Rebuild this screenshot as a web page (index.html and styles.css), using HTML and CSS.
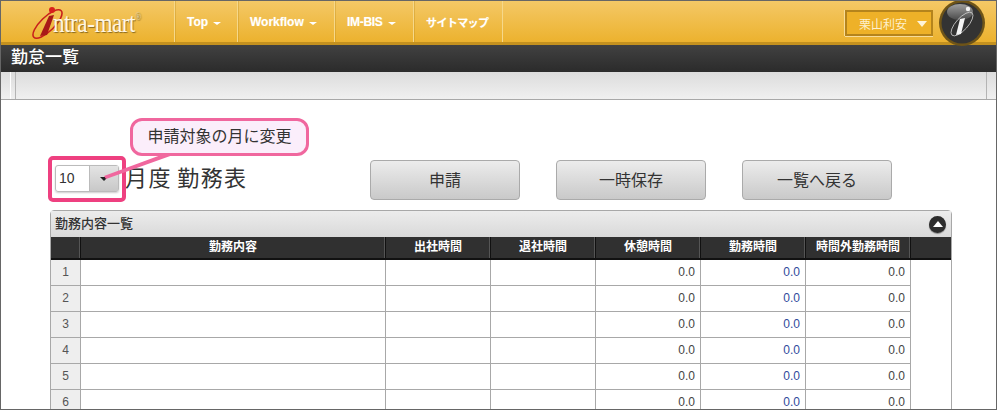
FILE: index.html
```html
<!DOCTYPE html>
<html lang="ja">
<head>
<meta charset="utf-8">
<title>勤怠一覧</title>
<link rel="stylesheet" href="styles.css">
</head>
<body>
<div class="frame">
  <header class="topbar">
    <div class="logo">
      <svg class="logo-mark" width="32" height="36" viewBox="0 0 32 36">
        <ellipse cx="15.5" cy="20" rx="19" ry="7" transform="rotate(-44 15.5 20)" fill="none" stroke="#c8201c" stroke-width="1.6"/>
        <path d="M17 12 L22 11 L15 31 L8 32 Z" fill="#a81a18"/>
        <circle cx="20" cy="6" r="3" fill="#d8201c"/>
      </svg>
      <span class="logo-text">ntra-mart<sup class="logo-reg">®</sup></span>
    </div>
    <nav class="nav">
      <a class="nav-item nav-top">Top<i class="caret"></i></a>
      <a class="nav-item nav-wf">Workflow<i class="caret"></i></a>
      <a class="nav-item nav-im">IM-BIS<i class="caret"></i></a>
      <a class="nav-item nav-map">サイトマップ</a>
    </nav>
    <div class="user">栗山利安<i class="user-caret"></i></div>
    <svg class="badge" width="48" height="48" viewBox="0 0 48 48">
      <defs>
        <linearGradient id="shine" x1="0" y1="0" x2="0" y2="1">
          <stop offset="0" stop-color="#a0a0a0"/>
          <stop offset="1" stop-color="#4a4a4a"/>
        </linearGradient>
      </defs>
      <circle cx="24" cy="24" r="23" fill="#6e5418"/>
      <circle cx="24" cy="24" r="20.5" fill="#333"/>
      <ellipse cx="22" cy="13" rx="13" ry="8" fill="url(#shine)"/>
      <ellipse cx="24" cy="25" rx="15" ry="6" transform="rotate(-48 24 25)" fill="none" stroke="#ccc" stroke-width="0.8"/>
      <path d="M22 20 L27 19 L23 35 L18 36 Z" fill="#f4f4f4"/>
      <circle cx="30" cy="10" r="2.2" fill="#f4f4f4"/>
    </svg>
  </header>
  <div class="titlebar">勤怠一覧</div>
  <div class="toolbar"><span class="tool-grip"></span><span class="tool-fill"></span></div>
  <main class="content">
    <div class="actions">
      <div class="month">
        <div class="select"><span class="select-value">10</span><span class="select-btn"><i class="select-caret"></i></span></div>
        <h1 class="heading">月度 勤務表</h1>
      </div>
      <button class="btn">申請</button>
      <button class="btn">一時保存</button>
      <button class="btn">一覧へ戻る</button>
    </div>
    <section class="panel">
      <div class="panel-head">
        <span class="panel-title">勤務内容一覧</span>
        <span class="collapse"><i class="collapse-arrow"></i></span>
      </div>
      <table class="grid">
        <colgroup>
          <col class="c-idx"><col class="c-main"><col class="c-time"><col class="c-time"><col class="c-time"><col class="c-time"><col class="c-time"><col>
        </colgroup>
        <thead>
          <tr><th></th><th>勤務内容</th><th>出社時間</th><th>退社時間</th><th>休憩時間</th><th>勤務時間</th><th>時間外勤務時間</th><th></th></tr>
        </thead>
        <tbody>
          <tr><td class="idx">1</td><td></td><td></td><td></td><td class="num">0.0</td><td class="num work">0.0</td><td class="num">0.0</td><td class="blank"></td></tr>
          <tr><td class="idx">2</td><td></td><td></td><td></td><td class="num">0.0</td><td class="num work">0.0</td><td class="num">0.0</td><td class="blank"></td></tr>
          <tr><td class="idx">3</td><td></td><td></td><td></td><td class="num">0.0</td><td class="num work">0.0</td><td class="num">0.0</td><td class="blank"></td></tr>
          <tr><td class="idx">4</td><td></td><td></td><td></td><td class="num">0.0</td><td class="num work">0.0</td><td class="num">0.0</td><td class="blank"></td></tr>
          <tr><td class="idx">5</td><td></td><td></td><td></td><td class="num">0.0</td><td class="num work">0.0</td><td class="num">0.0</td><td class="blank"></td></tr>
          <tr><td class="idx">6</td><td></td><td></td><td></td><td class="num">0.0</td><td class="num work">0.0</td><td class="num">0.0</td><td class="blank"></td></tr>
        </tbody>
      </table>
    </section>
    <div class="highlight"></div>
    <svg class="tail" width="80" height="32" viewBox="0 0 80 32"><polygon points="1,25 58,4 70,4 3,28" fill="#f0679e"/></svg>
    <div class="callout">申請対象の月に変更</div>
  </main>
</div>
</body>
</html>
```
FILE: styles.css
```css
* { box-sizing: border-box; }
html, body { margin: 0; padding: 0; background: #fff; }
body { font-family: "Liberation Sans", "Noto Sans CJK JP", sans-serif; color: #333; }
.frame { width: 997px; height: 410px; border: 1px solid #666; overflow: hidden; display: flex; flex-direction: column; }

.topbar { height: 44px; flex: none; display: flex; background: linear-gradient(#f4c866, #ecb22e); border-bottom: 3px solid #c4911f; position: relative; }
.logo { width: 173px; flex: none; display: flex; align-items: center; padding: 0 0 0 31px; }
.logo-mark { flex: none; margin: 0 -11px 0 0; }
.logo-text { font-family: "Liberation Serif", serif; font-size: 28px; letter-spacing: -0.6px; color: #fff6e4; text-shadow: 1px 1px 1px #8a6a20; line-height: 1; white-space: nowrap; margin-top: 3px; transform: scaleX(0.83); transform-origin: left center; }
.logo-reg { font-size: 10px; color: #d8c8a0; vertical-align: 12px; line-height: 0; }

.nav { display: flex; height: 41px; }
.nav-item { display: flex; align-items: center; height: 41px; font-size: 12px; font-weight: bold; color: #fff; padding-left: 12px; border-left: 1px solid #f6d88a; box-shadow: inset 1px 0 0 rgba(190,140,30,.35); text-shadow: 0 0 1px rgba(255,255,255,.4); }
.nav-top { width: 63px; }
.nav-wf { width: 97px; }
.nav-im { width: 79px; letter-spacing: -0.3px; }
.nav-map { width: 90px; border-right: 1px solid #f6d88a; padding-left: 12px; font-size: 11px; letter-spacing: -0.6px; font-weight: bold; }
.caret { width: 0; height: 0; margin: 4px 0 0 5px; border: 4px solid transparent; border-top: 3px solid #fff; border-bottom: 0; }

.user { position: absolute; left: 844px; top: 9px; width: 88px; height: 26px; display: flex; align-items: center; padding-left: 12px; font-size: 12px; color: #fdf0cc; background: #eeb128; border: 2px solid #b5841c; box-shadow: 0 1px 0 #f8dc98, -1px 0 0 #f8dc98; }
.user-caret { width: 0; height: 0; margin: 1px 0 0 10px; border: 5px solid transparent; border-top: 6px solid #fff4d8; border-bottom: 0; }
.badge { position: absolute; left: 937px; top: -2px; }

.titlebar { height: 27px; flex: none; padding: 0 0 2px 10px; display: flex; align-items: center; background: linear-gradient(#414141, #2b2b2b); color: #fff; font-size: 17px; font-weight: 500; line-height: 1; }
.toolbar { height: 28px; flex: none; display: flex; padding: 0 9px; background: linear-gradient(#dcdcdc, #f0f0f0); border-bottom: 1px solid #a8a8a8; }
.tool-grip { width: 6px; border-left: 1px solid #fff; border-right: 1px solid #b4b4b4; }
.tool-fill { flex: 1; border-right: 1px solid #b4b4b4; }

.content { flex: 1; position: relative; padding: 60px 44px 0 49px; min-height: 0; }
.actions { display: flex; height: 40px; gap: 36px; }
.month { width: 284px; flex: none; padding: 5px 0 0 5px; display: flex; align-items: flex-start; }
.select { width: 64px; height: 27px; flex: none; display: flex; border: 1px solid #bbb; border-radius: 3px; box-shadow: 0 1px 2px rgba(0,0,0,.2); }
.select-value { width: 34px; font-size: 14px; line-height: 25px; padding-left: 3px; color: #333; border-right: 1px solid #bbb; }
.select-btn { flex: 1; background: linear-gradient(#e4e4e4, #c8c8c8); display: flex; align-items: center; justify-content: center; }
.select-caret { width: 0; height: 0; border: 4px solid transparent; border-top: 4px solid #222; border-bottom: 0; }
.heading { margin: -1px 0 0 6px; font-size: 22px; font-weight: normal; letter-spacing: 1.4px; word-spacing: -2px; line-height: 30px; color: #333; white-space: nowrap; }
.btn { width: 150px; height: 40px; flex: none; padding: 0 0 2px; border: 1px solid #aaa; border-radius: 4px; background: linear-gradient(#ececec, #c9c9c9); font-family: inherit; font-size: 16px; color: #333; }

.panel { margin-top: 10px; border: 1px solid #a8a8a8; border-radius: 4px 4px 0 0; width: 902px; }
.panel-head { height: 26px; display: flex; align-items: center; justify-content: space-between; padding: 0 5px 0 4px; background: linear-gradient(#ececec, #d9d9d9); }
.panel-title { font-size: 13px; font-weight: 500; color: #333; margin-top: -3px; }
.collapse { width: 17px; height: 17px; border-radius: 50%; background: #2d2d2d; box-shadow: 0 1px 1px #888; display: flex; align-items: center; justify-content: center; }
.collapse-arrow { width: 0; height: 0; border: 5px solid transparent; border-bottom: 6px solid #fff; border-top: 0; }

.grid { width: 900px; table-layout: fixed; border-collapse: separate; border-spacing: 0; }
.c-idx { width: 30px; }
.c-main { width: 305px; }
.c-time { width: 105px; }
.grid th { height: 23px; padding: 0 0 4px; background: #303030; border-bottom: 2px solid #111; border-right: 1px solid #111; box-shadow: inset -1px 0 0 #555; color: #fff; font-size: 12px; font-weight: bold; text-align: center; }
.grid th:last-child { border-right: 0; box-shadow: none; }
.grid td { height: 26px; padding: 0 5px 2px 0; font-size: 12px; border-bottom: 1px solid #a8a8a8; border-right: 1px solid #a8a8a8; color: #444; }
.grid .idx { text-align: center; padding: 0 0 2px; background: #eeeeee; color: #555; }
.grid .num { text-align: right; }
.grid .work { color: #2f4a9c; }
.grid .blank { border: 0; }

.highlight { position: absolute; left: 47px; top: 56px; width: 78px; height: 46px; border: 4px solid #ee4080; border-radius: 5px; }
.tail { position: absolute; left: 102px; top: 51px; }
.callout { position: absolute; left: 129px; top: 18px; width: 179px; height: 38px; padding-bottom: 4px; display: flex; align-items: center; justify-content: center; background: #fbeefb; border: 3px solid #f0679e; border-radius: 12px; font-size: 16px; color: #333; }
```
